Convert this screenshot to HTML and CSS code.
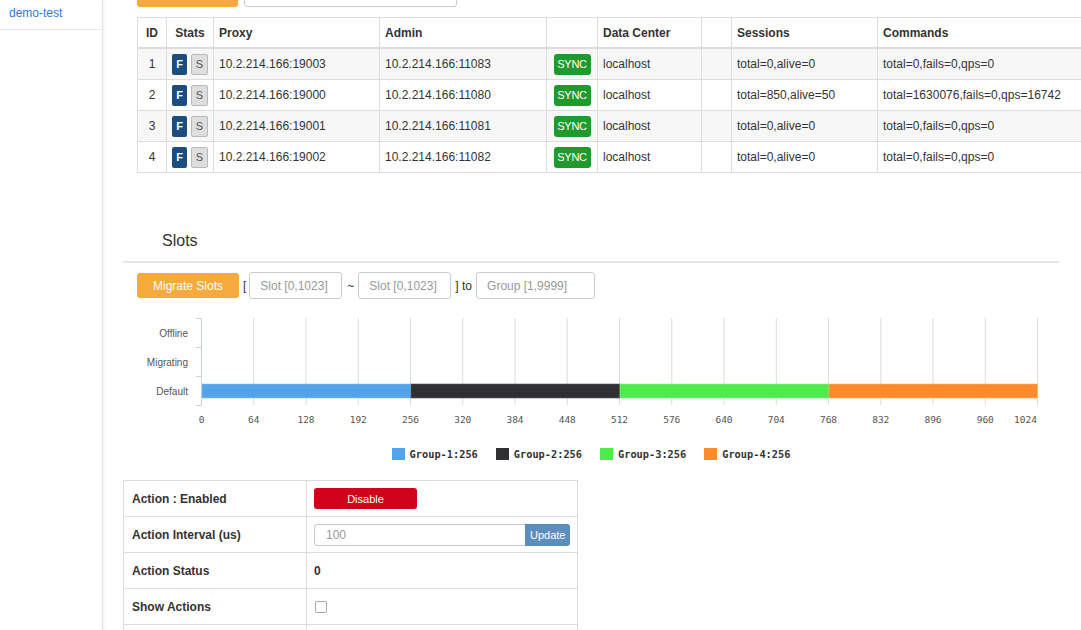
FILE: index.html
```html
<!DOCTYPE html>
<html>
<head>
<meta charset="utf-8">
<title>Codis Dashboard</title>
<link rel="stylesheet" href="styles.css">
</head>
<body>
<div class="layout">
  <aside class="sidebar">
    <div class="side-item"><a class="side-link" href="#">demo-test</a></div>
  </aside>
  <main class="main">
    <div class="toolbar">
      <button class="btn-top">New Proxy</button>
      <input class="top-input" type="text" placeholder="Proxy Admin Address">
    </div>

    <table class="proxy-table">
      <colgroup>
        <col class="c-id"><col class="c-stats"><col class="c-proxy"><col class="c-admin">
        <col class="c-sync"><col class="c-dc"><col class="c-empty"><col class="c-sess"><col class="c-cmd">
      </colgroup>
      <thead>
        <tr>
          <th class="center">ID</th><th class="center">Stats</th><th>Proxy</th><th>Admin</th>
          <th></th><th>Data Center</th><th></th><th>Sessions</th><th>Commands</th>
        </tr>
      </thead>
      <tbody>
        <tr>
          <td class="center">1</td>
          <td class="center"><span class="badge-f">F</span><span class="badge-s">S</span></td>
          <td>10.2.214.166:19003</td><td>10.2.214.166:11083</td>
          <td class="center"><span class="sync">SYNC</span></td>
          <td>localhost</td><td></td><td>total=0,alive=0</td><td>total=0,fails=0,qps=0</td>
        </tr>
        <tr>
          <td class="center">2</td>
          <td class="center"><span class="badge-f">F</span><span class="badge-s">S</span></td>
          <td>10.2.214.166:19000</td><td>10.2.214.166:11080</td>
          <td class="center"><span class="sync">SYNC</span></td>
          <td>localhost</td><td></td><td>total=850,alive=50</td><td>total=1630076,fails=0,qps=16742</td>
        </tr>
        <tr>
          <td class="center">3</td>
          <td class="center"><span class="badge-f">F</span><span class="badge-s">S</span></td>
          <td>10.2.214.166:19001</td><td>10.2.214.166:11081</td>
          <td class="center"><span class="sync">SYNC</span></td>
          <td>localhost</td><td></td><td>total=0,alive=0</td><td>total=0,fails=0,qps=0</td>
        </tr>
        <tr>
          <td class="center">4</td>
          <td class="center"><span class="badge-f">F</span><span class="badge-s">S</span></td>
          <td>10.2.214.166:19002</td><td>10.2.214.166:11082</td>
          <td class="center"><span class="sync">SYNC</span></td>
          <td>localhost</td><td></td><td>total=0,alive=0</td><td>total=0,fails=0,qps=0</td>
        </tr>
      </tbody>
    </table>

    <section class="slots">
      <h4 class="slots-title">Slots</h4>
      <div class="migrate">
        <button class="btn-migrate">Migrate Slots</button>
        <span class="sep sep-open">[</span>
        <input class="slot-input" type="text" placeholder="Slot [0,1023]">
        <span class="sep sep-tilde">~</span>
        <input class="slot-input" type="text" placeholder="Slot [0,1023]">
        <span class="sep sep-to">] to</span>
        <input class="group-input" type="text" placeholder="Group [1,9999]">
      </div>

      <svg class="chart" width="936" height="120" viewBox="0 0 936 120">
        <g class="grid" stroke="#dcdcdc" stroke-width="1">
          <line x1="130.75" y1="7" x2="130.75" y2="94"/>
          <line x1="183" y1="7" x2="183" y2="94"/>
          <line x1="235.25" y1="7" x2="235.25" y2="94"/>
          <line x1="287.5" y1="7" x2="287.5" y2="94"/>
          <line x1="339.75" y1="7" x2="339.75" y2="94"/>
          <line x1="392" y1="7" x2="392" y2="94"/>
          <line x1="444.25" y1="7" x2="444.25" y2="94"/>
          <line x1="496.5" y1="7" x2="496.5" y2="94"/>
          <line x1="548.75" y1="7" x2="548.75" y2="94"/>
          <line x1="601" y1="7" x2="601" y2="94"/>
          <line x1="653.25" y1="7" x2="653.25" y2="94"/>
          <line x1="705.5" y1="7" x2="705.5" y2="94"/>
          <line x1="757.75" y1="7" x2="757.75" y2="94"/>
          <line x1="810" y1="7" x2="810" y2="94"/>
          <line x1="862.25" y1="7" x2="862.25" y2="94"/>
          <line x1="914.5" y1="7" x2="914.5" y2="94"/>
        </g>
        <g stroke="#c8d4e0" stroke-width="1">
          <line x1="78.5" y1="7" x2="78.5" y2="94.5"/>
          <line x1="73" y1="7.5" x2="78.5" y2="7.5"/>
          <line x1="73" y1="36.5" x2="78.5" y2="36.5"/>
          <line x1="73" y1="65.5" x2="78.5" y2="65.5"/>
          <line x1="73" y1="94.5" x2="78.5" y2="94.5"/>
        </g>
        <g class="ylabels" font-size="10" fill="#555" text-anchor="end">
          <text x="65" y="25.5">Offline</text>
          <text x="65" y="54.5">Migrating</text>
          <text x="65" y="83.5">Default</text>
        </g>
        <g class="bars">
          <rect x="79" y="73" width="209" height="14" fill="#52a3e9" stroke="#8cc3f2" stroke-width="0.6"/>
          <rect x="288" y="73" width="209" height="14" fill="#303033" stroke="#5a5a5e" stroke-width="0.6"/>
          <rect x="497" y="73" width="209" height="14" fill="#4deb4b" stroke="#8ff28e" stroke-width="0.6"/>
          <rect x="706" y="73" width="208.5" height="14" fill="#fd8a2b" stroke="#feae6c" stroke-width="0.6"/>
        </g>
        <g class="xlabels" font-size="9.5" fill="#555" text-anchor="middle">
          <text x="78.5" y="111.5">0</text>
          <text x="130.75" y="111.5">64</text>
          <text x="183" y="111.5">128</text>
          <text x="235.25" y="111.5">192</text>
          <text x="287.5" y="111.5">256</text>
          <text x="339.75" y="111.5">320</text>
          <text x="392" y="111.5">384</text>
          <text x="444.25" y="111.5">448</text>
          <text x="496.5" y="111.5">512</text>
          <text x="548.75" y="111.5">576</text>
          <text x="601" y="111.5">640</text>
          <text x="653.25" y="111.5">704</text>
          <text x="705.5" y="111.5">768</text>
          <text x="757.75" y="111.5">832</text>
          <text x="810" y="111.5">896</text>
          <text x="862.25" y="111.5">960</text>
          <text x="914" y="111.5" text-anchor="end">1024</text>
        </g>
      </svg>

      <div class="legend">
        <span class="legend-item"><span class="swatch sw-1"></span>Group-1:256</span>
        <span class="legend-item"><span class="swatch sw-2"></span>Group-2:256</span>
        <span class="legend-item"><span class="swatch sw-3"></span>Group-3:256</span>
        <span class="legend-item"><span class="swatch sw-4"></span>Group-4:256</span>
      </div>
    </section>

    <table class="action-table">
      <colgroup><col class="a-label"><col class="a-value"></colgroup>
      <tbody>
        <tr>
          <td class="a-name">Action : Enabled</td>
          <td><button class="btn-disable">Disable</button></td>
        </tr>
        <tr>
          <td class="a-name">Action Interval (us)</td>
          <td>
            <div class="input-group">
              <input class="interval-input" type="text" placeholder="100">
              <button class="btn-update">Update</button>
            </div>
          </td>
        </tr>
        <tr>
          <td class="a-name">Action Status</td>
          <td class="a-strong">0</td>
        </tr>
        <tr>
          <td class="a-name">Show Actions</td>
          <td><span class="checkbox"></span></td>
        </tr>
        <tr>
          <td class="a-name"></td>
          <td></td>
        </tr>
      </tbody>
    </table>
  </main>
</div>
</body>
</html>
```

FILE: styles.css
```css
html, body {
  margin: 0;
  overflow: hidden;
  background: #fff;
}

body {
  font-family: "Liberation Sans", Arial, Helvetica, sans-serif;
  font-size: 12px;
  color: #333;
}

.layout {
  display: flex;
  min-height: 630px;
}

/* Sidebar */
.sidebar {
  width: 102px;
  flex: none;
  border-right: 1px solid #e3e3e3;
  box-shadow: 1px 0 2px rgba(0, 0, 0, 0.05);
}

.side-item {
  height: 30px;
  box-sizing: border-box;
  border-bottom: 1px solid #e9e9e9;
  padding-left: 9px;
  line-height: 27px;
}

.side-link {
  color: #2b7bd0;
  text-decoration: none;
  font-size: 12px;
}

/* Main */
.main {
  flex: 1;
  min-width: 0;
  padding: 0 22px 0 20px;
}

.toolbar {
  display: flex;
  gap: 6px;
  margin: -23px 0 0 14px;
  height: 30px;
}

.btn-top {
  width: 101px;
  height: 30px;
  background: #f6a93d;
  border: none;
  border-radius: 3px;
  color: #fff;
  font: 12px "Liberation Sans", Arial, sans-serif;
}

.top-input {
  width: 213px;
  height: 30px;
  box-sizing: border-box;
  border: 1px solid #ccc;
  border-radius: 3px;
  font: 12px "Liberation Sans", Arial, sans-serif;
  padding: 0 10px;
}

/* Proxy table */
.proxy-table {
  margin: 10px 0 0 14px;
  border-collapse: collapse;
  table-layout: fixed;
  width: 960px;
}

.c-id { width: 29px; }
.c-stats { width: 47px; }
.c-proxy { width: 166px; }
.c-admin { width: 167px; }
.c-sync { width: 51px; }
.c-dc { width: 104px; }
.c-empty { width: 30px; }
.c-sess { width: 146px; }
.c-cmd { width: 220px; }

.proxy-table th,
.proxy-table td {
  border: 1px solid #dddddd;
  padding: 0 5px;
  text-align: left;
  white-space: nowrap;
  overflow: hidden;
}

.proxy-table th {
  height: 29px;
  font-weight: bold;
  font-size: 12px;
  color: #333;
  border-bottom: 2px solid #dddddd;
}

.proxy-table td {
  height: 30px;
  font-size: 12px;
  color: #333;
}

.proxy-table tbody tr:nth-child(odd) {
  background: #f7f7f7;
}

.proxy-table .center {
  text-align: center;
}

.badge-f,
.badge-s {
  display: inline-block;
  vertical-align: middle;
  height: 21px;
  box-sizing: border-box;
  text-align: center;
  font-size: 11px;
  line-height: 20px;
  border-radius: 2px;
}

.badge-f {
  width: 15px;
  background: #1b4d7f;
  color: #fff;
  font-weight: bold;
  margin-right: 4px;
}

.badge-s {
  width: 17px;
  background: #dedede;
  border: 1px solid #b9b9b9;
  color: #555;
  line-height: 19px;
}

.sync {
  display: inline-block;
  vertical-align: middle;
  width: 37px;
  height: 21px;
  line-height: 21px;
  background: #1f9b2e;
  color: #fff;
  font-size: 11px;
  letter-spacing: -0.3px;
  border-radius: 3px;
  text-align: center;
}

/* Slots */
.slots-title {
  margin: 58px 0 0;
  padding: 0 0 10px 39px;
  font-size: 16px;
  line-height: 20px;
  font-weight: normal;
  color: #333;
  border-bottom: 2px solid #e6e6e6;
}

.migrate {
  display: flex;
  align-items: center;
  margin: 9px 0 0 14px;
  height: 27px;
}

.btn-migrate {
  width: 102px;
  height: 25px;
  background: #f6a93d;
  border: none;
  border-radius: 3px;
  color: #fff;
  font: 12px "Liberation Sans", Arial, sans-serif;
  padding: 0;
}

.sep {
  font-size: 12px;
  color: #333;
}

.sep-open { margin: 0 3px 0 4px; }
.sep-tilde { margin: 0 4px 0 5px; }
.sep-to { margin: 0 4px 0 4px; }

.slot-input,
.group-input {
  height: 27px;
  box-sizing: border-box;
  border: 1px solid #cccccc;
  border-radius: 3px;
  padding: 0 10px;
  font: 12px "Liberation Sans", Arial, sans-serif;
  color: #555;
}

.slot-input { width: 93px; }
.group-input { width: 119px; }

.slot-input::placeholder,
.group-input::placeholder,
.interval-input::placeholder {
  color: #999;
}

.chart {
  display: block;
  margin-top: 12px;
}

.chart .ylabels {
  font-family: "Liberation Sans", Arial, sans-serif;
}

.chart .xlabels {
  font-family: "DejaVu Sans Mono", monospace;
}

.legend {
  display: flex;
  justify-content: center;
  gap: 18px;
  margin-top: 16px;
  height: 14px;
  font-family: "DejaVu Sans Mono", monospace;
  font-weight: bold;
  font-size: 10.3px;
  color: #333;
}

.legend-item {
  display: flex;
  align-items: center;
  gap: 5px;
}

.swatch {
  display: inline-block;
  width: 13px;
  height: 12px;
}

.sw-1 { background: #52a3e9; }
.sw-2 { background: #303033; }
.sw-3 { background: #4deb4b; }
.sw-4 { background: #fd8a2b; }

/* Action table */
.action-table {
  margin-top: 19px;
  width: 455px;
  border-collapse: collapse;
  table-layout: fixed;
}

.a-label { width: 183px; }

.action-table td {
  border: 1px solid #dddddd;
  height: 35px;
  padding: 0 7px;
  font-size: 12px;
  color: #333;
}

.action-table .a-name {
  padding-left: 8px;
  font-weight: bold;
}

.a-strong {
  font-weight: bold;
}

.btn-disable {
  width: 103px;
  height: 21px;
  padding: 0;
  background: #d0031b;
  border: none;
  border-radius: 3px;
  color: #fff;
  font: 11px "Liberation Sans", Arial, sans-serif;
}

.input-group {
  display: flex;
  height: 22px;
}

.interval-input {
  width: 213px;
  height: 22px;
  box-sizing: border-box;
  border: 1px solid #c8c8c8;
  border-right: none;
  border-radius: 4px 0 0 4px;
  padding: 0 11px;
  font: 12px "Liberation Sans", Arial, sans-serif;
}

.btn-update {
  width: 45px;
  height: 22px;
  padding: 0;
  border: none;
  border-radius: 0 3px 3px 0;
  background: #5b8dbd;
  color: #fff;
  font: 11px "Liberation Sans", Arial, sans-serif;
}

.checkbox {
  display: inline-block;
  vertical-align: middle;
  width: 10px;
  height: 10px;
  margin-left: 1px;
  border: 1px solid #a8a8a8;
  border-radius: 2px;
  background: #fff;
}
```
